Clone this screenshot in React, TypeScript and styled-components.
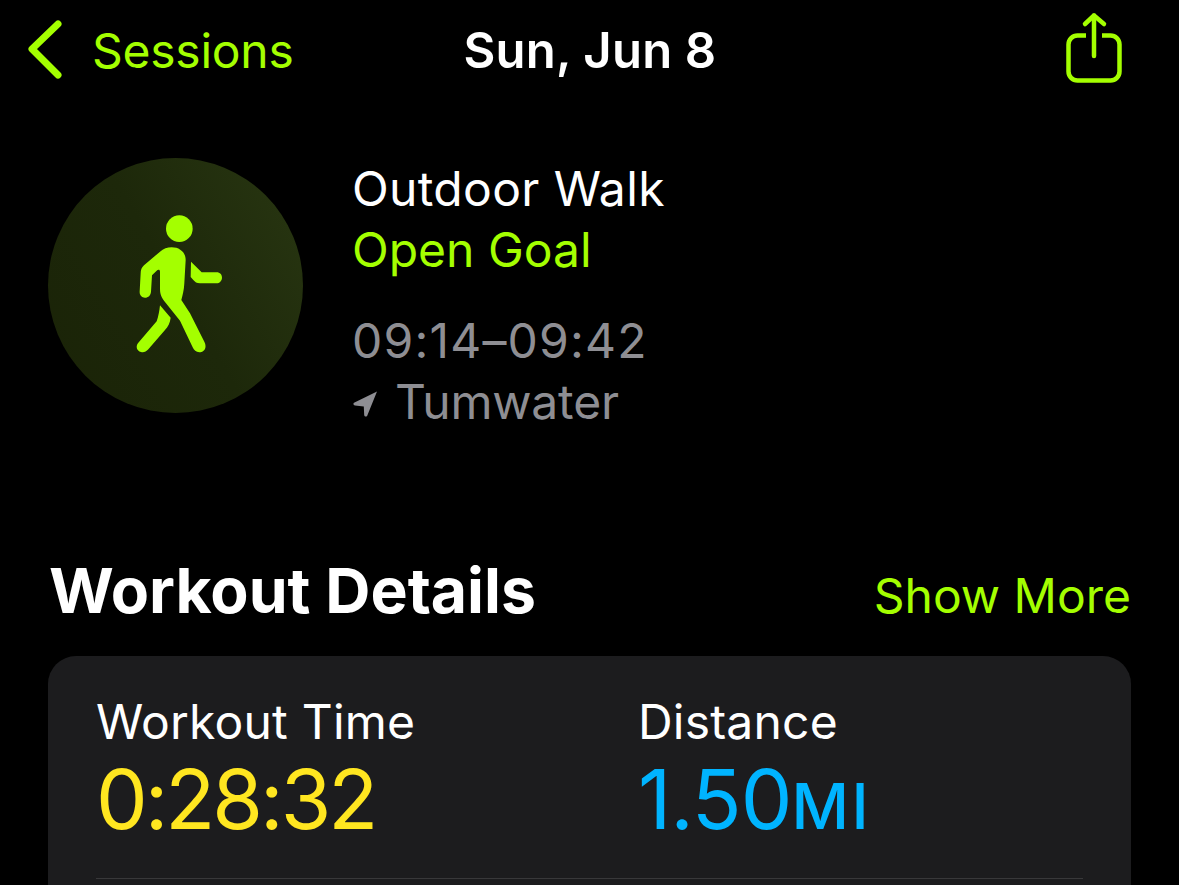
import styled, { createGlobalStyle } from "styled-components";

const GREEN = "#a4ff00";
const FONT = `Inter, "Liberation Sans", sans-serif`;

const Global = createGlobalStyle`
  html, body {
    margin: 0;
    background: #000;
    height: 100%;
    overflow: hidden;
  }
`;

const Screen = styled.div`
  width: 1179px;
  height: 885px;
  overflow: hidden;
  background: #000;
  color: #fff;
  font-family: ${FONT};
  box-sizing: border-box;
`;

const NavBar = styled.header`
  display: grid;
  grid-template-columns: 400px 1fr 400px;
  align-items: center;
  height: 100px;
  padding: 0 54px 0 28px;
`;

const BackLink = styled.div`
  display: flex;
  align-items: center;
  gap: 28px;
  color: ${GREEN};
  font-size: 48px;
  letter-spacing: -0.25px;
`;

const NavTitle = styled.div`
  font-size: 49px;
  font-weight: 600;
  letter-spacing: 0.2px;
  text-align: center;
  padding-left: 27px;
`;

const ShareButton = styled.div`
  display: flex;
  justify-content: flex-end;
`;

const Summary = styled.section`
  display: flex;
  gap: 49px;
  padding: 58px 0 0 48px;
`;

const Badge = styled.div`
  width: 255px;
  height: 255px;
  border-radius: 50%;
  background: linear-gradient(60deg, #1a2307 0%, #1d280a 50%, #293712 100%);
  flex-shrink: 0;
`;

const SummaryText = styled.div`
  display: flex;
  flex-direction: column;
  font-size: 48px;
  line-height: 61px;
`;

const Title = styled.div`
  letter-spacing: 0.35px;
`;

const Goal = styled.div`
  color: ${GREEN};
`;

const TimeRange = styled.div`
  color: #8e8e93;
  margin-top: 30px;
  letter-spacing: 1.2px;
`;

const Place = styled.div`
  color: #8e8e93;
  display: flex;
  align-items: center;
  gap: 16px;
  margin-left: 1px;
  letter-spacing: -0.2px;
`;

const SectionHead = styled.div`
  display: flex;
  justify-content: space-between;
  align-items: baseline;
  padding: 0 48px 0 49px;
  margin-top: 122px;
`;

const SectionTitle = styled.h2`
  margin: 0;
  font-size: 62.5px;
  font-weight: 700;
  line-height: 72px;
`;

const ShowMore = styled.div`
  color: ${GREEN};
  font-size: 48px;
`;

const Card = styled.div`
  margin: 30px 48px 0;
  padding: 34px 48px 0;
  height: 400px;
  background: #1c1c1e;
  border-radius: 28px;
`;

const StatRow = styled.div`
  display: grid;
  grid-template-columns: 542px 1fr;
  padding-bottom: 32px;
  border-bottom: 1.5px solid #38383a;
`;

const StatLabel = styled.div`
  font-size: 48px;
  line-height: 64px;
  letter-spacing: 0.2px;
`;

const StatValue = styled.div<{ $color: string; $spacing: number }>`
  color: ${(p) => p.$color};
  font-size: 82px;
  line-height: 92px;
  letter-spacing: ${(p) => p.$spacing}px;
`;

const Unit = styled.span`
  font-size: 63px;
  font-weight: 500;
  line-height: 0;
  letter-spacing: 2.5px;
`;

function Chevron() {
  return (
    <svg width="36" height="60" viewBox="0 0 36 60" fill="none">
      <path
        d="M30 4 L4 29 L30 55"
        stroke={GREEN}
        strokeWidth="7"
        strokeLinecap="round"
        strokeLinejoin="round"
      />
    </svg>
  );
}

function ShareIcon() {
  return (
    <svg width="60" height="76" viewBox="0 0 60 76" fill="none">
      <g stroke={GREEN} strokeWidth="4.5" strokeLinecap="round" strokeLinejoin="round">
        <path
          d="M21 23.5 H12.5 a9 9 0 0 0 -9 9 V59.5 a9 9 0 0 0 9 9 H45.5 a9 9 0 0 0 9 -9 V32.5 a9 9 0 0 0 -9 -9 H37"
          strokeLinecap="butt"
        />
        <path d="M29 44 V3.5" />
        <path d="M20 12 L29 3.5 L39 12" />
      </g>
    </svg>
  );
}

function LocationArrow() {
  return (
    <svg width="26" height="30" viewBox="0 0 26 30">
      <path d="M24 4.5 L14.5 28 C14 30 11.5 30 11.2 28 L10.8 19.5 L2 18.5 C0 18 0 16 1.5 15.5 Z" fill="#8e8e93" />
    </svg>
  );
}

// walking figure, drawn on the badge's own 765 unit grid
function WalkIcon() {
  return (
    <svg width="255" height="255" viewBox="24 24 765 765" fill={GREEN}>
      <circle cx="418" cy="236" r="40" />
      <path d="M395 292 C420 292 437 308 437 330 L433 400 C432 420 428 435 424 450 L450 490 L493 575 C503 595 490 607 478 607 C468 607 462 600 458 592 L420 512 L372 452 C362 438 360 430 360 415 L360 365 C360 358 354 358 350 362 L336 376 L333 425 C332 436 325 443 315 443 C305 443 298 435 299 424 L302 370 C302 360 305 352 312 346 L360 305 C370 296 382 292 395 292 Z" />
      <path d="M360 466 L392 503 C390 520 384 530 375 540 L325 598 C318 606 310 608 303 606 C290 602 286 588 295 578 L350 514 C355 500 358 485 360 466 Z" />
      <path d="M453 335 L485 367 L530 367 C540 367 546 374 546 383 C546 392 538 400 530 400 L480 400 C470 400 465 396 460 390 L452 381 Z" />
    </svg>
  );
}

export default function App() {
  return (
    <Screen>
      <Global />
      <NavBar>
        <BackLink>
          <Chevron />
          Sessions
        </BackLink>
        <NavTitle>Sun, Jun 8</NavTitle>
        <ShareButton>
          <ShareIcon />
        </ShareButton>
      </NavBar>

      <Summary>
        <Badge>
          <WalkIcon />
        </Badge>
        <SummaryText>
          <Title>Outdoor Walk</Title>
          <Goal>Open Goal</Goal>
          <TimeRange>09:14–09:42</TimeRange>
          <Place>
            <LocationArrow />
            Tumwater
          </Place>
        </SummaryText>
      </Summary>

      <SectionHead>
        <SectionTitle>Workout Details</SectionTitle>
        <ShowMore>Show More</ShowMore>
      </SectionHead>

      <Card>
        <StatRow>
          <div>
            <StatLabel>Workout Time</StatLabel>
            <StatValue $color="#ffe620" $spacing={-3}>
              0:28:32
            </StatValue>
          </div>
          <div>
            <StatLabel>Distance</StatLabel>
            <StatValue $color="#00b4ff" $spacing={-1}>
              1.50<Unit>MI</Unit>
            </StatValue>
          </div>
        </StatRow>
      </Card>
    </Screen>
  );
}
